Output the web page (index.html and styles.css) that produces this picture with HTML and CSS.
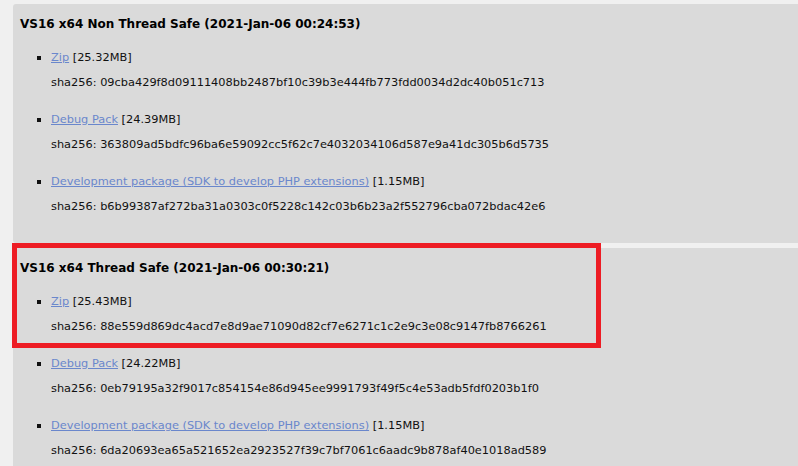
FILE: index.html
```html
<!DOCTYPE html>
<html>
<head>
<link rel="stylesheet" href="styles.css">
</head>
<body>
<div id="builds">
  <div class="build">
    <h3>VS16 x64 Non Thread Safe (2021-Jan-06 00:24:53)</h3>
    <ul>
      <li><a href="#">Zip</a> [25.32MB]<span class="sha">sha256: 09cba429f8d09111408bb2487bf10c39b3e444fb773fdd0034d2dc40b051c713</span></li>
      <li><a href="#">Debug Pack</a> [24.39MB]<span class="sha">sha256: 363809ad5bdfc96ba6e59092cc5f62c7e4032034106d587e9a41dc305b6d5735</span></li>
      <li><a href="#">Development package (SDK to develop PHP extensions)</a> [1.15MB]<span class="sha">sha256: b6b99387af272ba31a0303c0f5228c142c03b6b23a2f552796cba072bdac42e6</span></li>
    </ul>
  </div>

  <div class="build">
    <div class="highlight"></div>
    <h3>VS16 x64 Thread Safe (2021-Jan-06 00:30:21)</h3>
    <ul>
      <li><a href="#">Zip</a> [25.43MB]<span class="sha">sha256: 88e559d869dc4acd7e8d9ae71090d82cf7e6271c1c2e9c3e08c9147fb8766261</span></li>
      <li><a href="#">Debug Pack</a> [24.22MB]<span class="sha">sha256: 0eb79195a32f9017c854154e86d945ee9991793f49f5c4e53adb5fdf0203b1f0</span></li>
      <li><a href="#">Development package (SDK to develop PHP extensions)</a> [1.15MB]<span class="sha">sha256: 6da20693ea65a521652ea2923527f39c7bf7061c6aadc9b878af40e1018ad589</span></li>
    </ul>
  </div>
</div>
</body>
</html>
```

FILE: styles.css
```css
html, body {
  margin: 0;
  padding: 0;
  background-color: #f0f0f0;
}

#builds {
  padding: 4px 0 0 13px;
  font-family: "DejaVu Sans", Verdana, sans-serif;
  font-size: 11.35px;
  color: #111;
}

.build {
  position: relative;
  background-color: #dadada;
  border-radius: 3px 0 0 3px;
  padding: 10px 0 24px 7px;
  margin-bottom: 5px;
}

.build h3 {
  margin: 0;
  font-size: 12px;
  line-height: 20px;
  font-weight: bold;
  color: #000;
}

.build ul {
  margin: 11px 0 0 0;
  padding: 0 0 0 31px;
  list-style: square;
}

.build li {
  line-height: 25px;
  margin-bottom: 12px;
}

.build li:last-child {
  margin-bottom: 0;
}

.build a {
  color: #6a87cc;
}

.sha {
  display: block;
}

/* red box drawn over the thread safe zip */
.highlight {
  position: absolute;
  left: -1px;
  top: -5px;
  width: 579px;
  height: 95px;
  border: 5px solid #ed1c24;
}
```
